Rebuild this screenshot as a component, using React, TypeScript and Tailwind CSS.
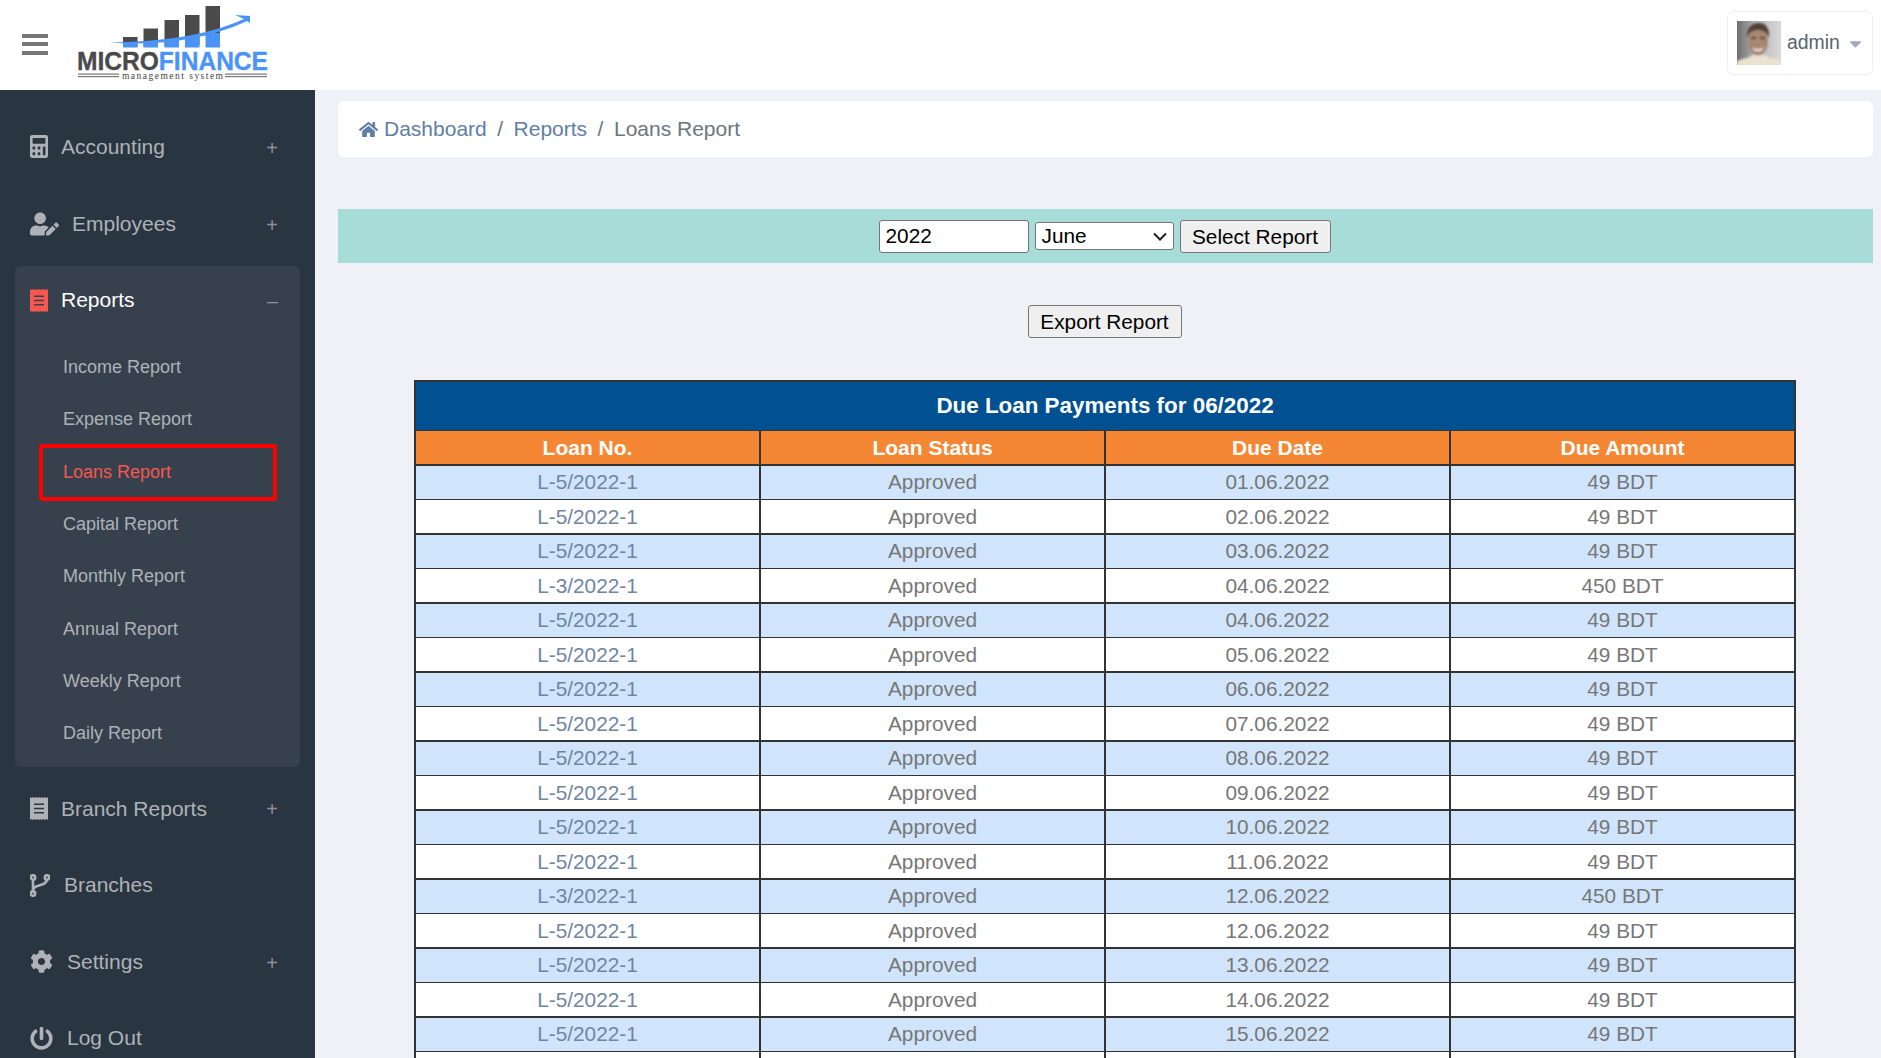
import React from 'react';
import { FaCalculator, FaCaretDown, FaCog, FaHome, FaPowerOff, FaUserEdit } from 'react-icons/fa';

const subItems = ['Income Report', 'Expense Report', 'Loans Report', 'Capital Report', 'Monthly Report', 'Annual Report', 'Weekly Report', 'Daily Report'];

// the last row only shows its top edge in the window, its text falls below the fold
const rows = [
  ['L-5/2022-1', '01.06.2022', '49 BDT'],
  ['L-5/2022-1', '02.06.2022', '49 BDT'],
  ['L-5/2022-1', '03.06.2022', '49 BDT'],
  ['L-3/2022-1', '04.06.2022', '450 BDT'],
  ['L-5/2022-1', '04.06.2022', '49 BDT'],
  ['L-5/2022-1', '05.06.2022', '49 BDT'],
  ['L-5/2022-1', '06.06.2022', '49 BDT'],
  ['L-5/2022-1', '07.06.2022', '49 BDT'],
  ['L-5/2022-1', '08.06.2022', '49 BDT'],
  ['L-5/2022-1', '09.06.2022', '49 BDT'],
  ['L-5/2022-1', '10.06.2022', '49 BDT'],
  ['L-5/2022-1', '11.06.2022', '49 BDT'],
  ['L-3/2022-1', '12.06.2022', '450 BDT'],
  ['L-5/2022-1', '12.06.2022', '49 BDT'],
  ['L-5/2022-1', '13.06.2022', '49 BDT'],
  ['L-5/2022-1', '14.06.2022', '49 BDT'],
  ['L-5/2022-1', '15.06.2022', '49 BDT'],
  ['', '', ''],
];

const Logo = () => (
  <svg width="195" height="76" viewBox="0 0 195 76">
    <g fill="#4a4a4a">
      <rect x="46" y="31" width="14.5" height="10" />
      <rect x="66.5" y="22.5" width="14.5" height="18" />
      <rect x="87.5" y="14" width="14.5" height="26" />
      <rect x="108" y="9" width="14.5" height="30" />
      <rect x="128.5" y="0" width="14.5" height="30" />
    </g>
    <g fill="#4b94f7">
      <rect x="46" y="37" width="14.5" height="4.5" />
      <rect x="66.5" y="36" width="14.5" height="5.5" />
      <rect x="87.5" y="34" width="14.5" height="7.5" />
      <rect x="108" y="31" width="14.5" height="10.5" />
      <rect x="128.5" y="27" width="14.5" height="14.5" />
      <path d="M33 36.5 C80 36 130 30 167 13 L158 9 L173 10 L173 17 L170 15 C130 34 80 40 33 36.5 Z" />
    </g>
    <text x="0" y="64" fontFamily="'Liberation Sans', sans-serif" fontWeight="700" fontSize="25.6" textLength="191" lengthAdjust="spacingAndGlyphs" strokeWidth="0.35">
      <tspan fill="#4a4a4a" stroke="#4a4a4a">MICRO</tspan>
      <tspan fill="#4b94f7" stroke="#4b94f7">FINANCE</tspan>
    </text>
    <text x="45" y="72.5" fontFamily="'Liberation Serif', serif" fontSize="9.5" fill="#444" textLength="101">management system</text>
    <g fill="#777">
      <rect x="1" y="67.5" width="41" height="1.2" />
      <rect x="1" y="70" width="41" height="1.2" />
      <rect x="148" y="67.5" width="42" height="1.2" />
      <rect x="148" y="70" width="42" height="1.2" />
    </g>
  </svg>
);

const Avatar = () => (
  <svg width="44" height="44" viewBox="0 0 44 44">
    <defs>
      <filter id="soft">
        <feGaussianBlur stdDeviation="0.9" />
      </filter>
      <linearGradient id="wall" x1="0" x2="1" y1="0" y2="0">
        <stop offset="0" stopColor="#6f6f6f" />
        <stop offset="0.45" stopColor="#b5b5b5" />
        <stop offset="1" stopColor="#d9d9d9" />
      </linearGradient>
    </defs>
    <rect width="44" height="44" fill="url(#wall)" />
    <g filter="url(#soft)">
      <path d="M0 46 L0 40 C7 37 13 37 15 34 L28 34 C31 37 38 37 46 40 L46 46 Z" fill="#e9e2d0" />
      <ellipse cx="21" cy="20" rx="10" ry="14.5" fill="#a98671" />
      <path d="M10 17 C9 6 16 2 22 2 C29 2 33 8 32 17 C30 11 26 9 21 9 C16 9 12 11 10 17 Z" fill="#4f4036" />
      <rect x="14" y="16" width="5" height="1.8" fill="#3f302a" />
      <rect x="23" y="16" width="5" height="1.8" fill="#3f302a" />
      <path d="M15 26 C18 29 24 29 27 26 L26 28 C24 31 18 31 16 28 Z" fill="#f3ece4" />
    </g>
  </svg>
);

const ReceiptIcon = ({ className }: { className: string }) => (
  <svg width="18" height="23" viewBox="0 0 18 23" className={className}>
    <path
      fill="currentColor"
      fillRule="evenodd"
      d="M0 0 L1.5 1 L3 0 L4.5 1 L6 0 L7.5 1 L9 0 L10.5 1 L12 0 L13.5 1 L15 0 L16.5 1 L18 0 L18 23 L16.5 22 L15 23 L13.5 22 L12 23 L10.5 22 L9 23 L7.5 22 L6 23 L4.5 22 L3 23 L1.5 22 L0 23 Z M4 6.5 L14 6.5 L14 8.1 L4 8.1 Z M4 10.7 L14 10.7 L14 12.3 L4 12.3 Z M4 14.9 L14 14.9 L14 16.5 L4 16.5 Z"
    />
  </svg>
);

const BranchIcon = () => (
  <svg width="20" height="23" viewBox="0 0 20 23" fill="none" stroke="currentColor" strokeWidth="2.6">
    <circle cx="3" cy="3.4" r="2.2" />
    <circle cx="3" cy="19.6" r="2.2" />
    <circle cx="17" cy="3.4" r="2.2" />
    <path d="M3 5.6 L3 17.4 M17 5.6 C17 13 3 9.5 3 16.5" />
  </svg>
);

const NavItem = ({ icon, label, gap, height = 'h-[76.6px]', plus = true }: { icon: React.ReactNode; label: string; gap: string; height?: string; plus?: boolean }) => (
  <div className={`flex ${height} items-center pl-[30px] pr-[37px] text-[21px] text-[#aeb2b7]`}>
    {icon}
    <span className={gap}>{label}</span>
    {plus && <span className="ml-auto pt-[2px] text-[20px] font-light text-[#8b929b]">+</span>}
  </div>
);

export default function App() {
  return (
    <div className="h-[1058px] overflow-hidden bg-[#f0f1f7] font-['Liberation_Sans',Arial,sans-serif]">
      {/* Top bar */}
      <header className="flex h-[90px] items-center bg-white pr-2">
        <div className="ml-[22px] mt-[-2px] flex w-[26px] flex-col gap-[4.5px]">
          <div className="h-[4px] bg-[#777]" />
          <div className="h-[4px] bg-[#777]" />
          <div className="h-[4px] bg-[#777]" />
        </div>
        <div className="ml-[29px] mt-[-3px]">
          <Logo />
        </div>
        <div className="ml-auto mt-[-4px] flex h-[64px] w-[146px] items-center rounded-md border border-[#f0f1f7] pl-[9px]">
          <Avatar />
          <span className="ml-[6px] text-[19.4px] text-[#5a6270]">admin</span>
          <FaCaretDown className="ml-[6px] text-[#a6a9bd]" size={19} />
        </div>
      </header>

      <div className="flex">
        {/* Sidebar */}
        <aside className="h-[968px] w-[315px] shrink-0 bg-[#2a3542] pt-[18px]">
          <NavItem
            height="h-[77px]"
            icon={<FaCalculator preserveAspectRatio="none" className="h-[23px] w-[18px]" />}
            label="Accounting"
            gap="ml-[13px]"
          />
          <NavItem height="h-[77px]" icon={<FaUserEdit size={24} className="w-[29px]" />} label="Employees" gap="ml-[13px]" />
          <div className="mx-[15px] mb-[3px] mt-[4px] rounded-md bg-[#37414e] pb-[7px]">
            <div className="flex h-[68px] items-center pl-[15px] pr-[22px] text-[21px] text-white">
              <ReceiptIcon className="text-[#f6574f]" />
              <span className="ml-[13px]">Reports</span>
              <span className="ml-auto pt-[2px] text-[20px] font-light text-[#8b929b]">–</span>
            </div>
            <div className="mt-[7px]">
              {subItems.map((item) =>
                item === 'Loans Report' ? (
                  <div
                    key={item}
                    className="mb-[-3.3px] ml-[24px] mt-[-1.3px] flex h-[57px] w-[238px] items-center rounded-[3px] border-[4px] border-[#ff0000] pl-[20px] text-[18px] text-[#f6574f]"
                  >
                    {item}
                  </div>
                ) : (
                  <div key={item} className="flex h-[52.4px] items-center pl-[48px] text-[18px] text-[#aeb2b7]">
                    {item}
                  </div>
                ),
              )}
            </div>
          </div>
          <NavItem icon={<ReceiptIcon className="" />} label="Branch Reports" gap="ml-[13px]" />
          <NavItem icon={<BranchIcon />} label="Branches" gap="ml-[14px]" plus={false} />
          <NavItem icon={<FaCog size={23} className="w-[23px]" />} label="Settings" gap="ml-[14px]" />
          <NavItem icon={<FaPowerOff size={23} className="w-[23px]" />} label="Log Out" gap="ml-[14px]" plus={false} />
        </aside>

        {/* Main content */}
        <main className="min-w-0 flex-1 pl-[23px] pr-2 pt-[11px]">
          <div className="flex h-[56px] items-center rounded-md bg-white pl-[21px] text-[21px]">
            <FaHome size={19} className="mr-[6px] text-[#5f7ea6]" />
            <span className="text-[#5f7ea6]">Dashboard</span>
            <span className="mx-[10.5px] text-[#6c757d]">/</span>
            <span className="text-[#5f7ea6]">Reports</span>
            <span className="mx-[10.5px] text-[#6c757d]">/</span>
            <span className="text-[#6c757d]">Loans Report</span>
          </div>

          <div className="mt-[52px] flex h-[54px] items-center justify-center gap-[6px] bg-[#a8dcd8] pr-[2px] text-[20.8px] text-black">
            <input defaultValue="2022" className="h-[33px] w-[150px] rounded-[3px] border border-[#767676] bg-white px-[6px]" />
            <div className="relative">
              <select defaultValue="June" className="block h-[28px] w-[139px] appearance-none rounded-[3px] border border-[#767676] bg-white pl-[6px] leading-[22px]">
                <option>June</option>
              </select>
              <svg width="14" height="9" viewBox="0 0 14 9" className="pointer-events-none absolute right-[7px] top-[10px]" fill="none" stroke="#222" strokeWidth="2">
                <path d="M1 1.5 L7 7.5 L13 1.5" />
              </svg>
            </div>
            <button className="h-[33px] w-[151px] rounded-[3px] border border-[#767676] bg-[#efefef] pb-[1px]">Select Report</button>
          </div>

          <div className="mt-[42px] flex justify-center pr-[2px]">
            <button className="h-[33px] w-[154px] rounded-[3px] border border-[#767676] bg-[#efefef] text-[20.8px] text-black">Export Report</button>
          </div>

          <div className="ml-[76px] mr-[77px] mt-[42px]">
            <table className="w-full table-fixed border-separate border-spacing-0 border-2 border-[#333] text-center text-[20.8px] leading-[24px]">
              <colgroup>
                <col className="w-[345px]" />
                <col className="w-[345px]" />
                <col className="w-[345px]" />
                <col />
              </colgroup>
              <thead>
                <tr>
                  <th colSpan={4} className="h-[49px] border-b border-[#333] bg-[#005092] text-[22.4px] font-bold text-white">
                    Due Loan Payments for 06/2022
                  </th>
                </tr>
                <tr className="bg-[#f58634] text-white">
                  {['Loan No.', 'Loan Status', 'Due Date', 'Due Amount'].map((h, i) => (
                    <th key={h} className={i < 3 ? 'h-[35px] border-b-2 border-r-2 border-[#333] text-[21px] font-bold' : 'h-[35px] border-b-2 border-[#333] text-[21px] font-bold'}>
                      {h}
                    </th>
                  ))}
                </tr>
              </thead>
              <tbody className="text-[#777]">
                {rows.map((r, i) => {
                  // blue rows end in a thin rule, white rows in a thick one
                  const cell = i % 2 === 0 ? 'h-[34px] border-b border-[#333] p-0 pb-[1px]' : 'h-[35px] border-b-2 border-[#333] p-0';
                  return (
                    <tr key={i} className={i % 2 === 0 ? 'bg-[#d0e5fc]' : 'bg-white'}>
                      <td className={`${cell} border-r-2 text-[#6f86a3]`}>{r[0]}</td>
                      <td className={`${cell} border-r-2`}>{r[0] ? 'Approved' : ''}</td>
                      <td className={`${cell} border-r-2`}>{r[1]}</td>
                      <td className={cell}>{r[2]}</td>
                    </tr>
                  );
                })}
              </tbody>
            </table>
          </div>
        </main>
      </div>
    </div>
  );
}
